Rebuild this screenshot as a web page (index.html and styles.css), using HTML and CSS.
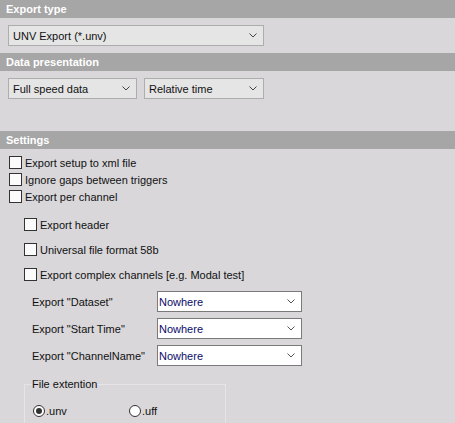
FILE: index.html
```html
<!DOCTYPE html>
<html>
<head>
<meta charset="utf-8">
<link rel="stylesheet" href="styles.css">
</head>
<body>
<div class="header">Export type</div>
<div class="section sec-type">
  <div class="combo combo-gray w-full"><span class="val">UNV Export (*.unv)</span><svg class="chev" width="8" height="5" viewBox="0 0 8 5"><path d="M0.5 0.5 L4 4 L7.5 0.5" fill="none" stroke="#444" stroke-width="1"/></svg></div>
</div>
<div class="header">Data presentation</div>
<div class="section sec-data">
  <div class="combo combo-gray w-a"><span class="val">Full speed data</span><svg class="chev" width="8" height="5" viewBox="0 0 8 5"><path d="M0.5 0.5 L4 4 L7.5 0.5" fill="none" stroke="#444" stroke-width="1"/></svg></div>
  <div class="combo combo-gray w-b"><span class="val">Relative time</span><svg class="chev" width="8" height="5" viewBox="0 0 8 5"><path d="M0.5 0.5 L4 4 L7.5 0.5" fill="none" stroke="#444" stroke-width="1"/></svg></div>
</div>
<div class="header">Settings</div>
<div class="section sec-settings">
  <div class="checks">
    <label class="check"><span class="box"></span>Export setup to xml file</label>
    <label class="check"><span class="box"></span>Ignore gaps between triggers</label>
    <label class="check"><span class="box"></span>Export per channel</label>
  </div>
  <div class="checks sub">
    <label class="check"><span class="box"></span>Export header</label>
    <label class="check"><span class="box"></span>Universal file format 58b</label>
    <label class="check"><span class="box"></span>Export complex channels [e.g. Modal test]</label>
  </div>
  <div class="fields">
    <div class="field"><span class="flabel">Export "Dataset"</span><div class="combo combo-white"><span class="val">Nowhere</span><svg class="chev" width="8" height="5" viewBox="0 0 8 5"><path d="M0.5 0.5 L4 4 L7.5 0.5" fill="none" stroke="#555" stroke-width="1"/></svg></div></div>
    <div class="field"><span class="flabel">Export "Start Time"</span><div class="combo combo-white"><span class="val">Nowhere</span><svg class="chev" width="8" height="5" viewBox="0 0 8 5"><path d="M0.5 0.5 L4 4 L7.5 0.5" fill="none" stroke="#555" stroke-width="1"/></svg></div></div>
    <div class="field"><span class="flabel">Export "ChannelName"</span><div class="combo combo-white"><span class="val">Nowhere</span><svg class="chev" width="8" height="5" viewBox="0 0 8 5"><path d="M0.5 0.5 L4 4 L7.5 0.5" fill="none" stroke="#555" stroke-width="1"/></svg></div></div>
  </div>
  <fieldset class="group">
    <legend>File extention</legend>
    <div class="radios">
      <label class="radio r1"><span class="circle checked"></span>.unv</label>
      <label class="radio"><span class="circle"></span>.uff</label>
    </div>
  </fieldset>
</div>
</body>
</html>
```

FILE: styles.css
```css
html, body {
  margin: 0;
  padding: 0;
}
body {
  width: 455px;
  height: 423px;
  overflow: hidden;
  background: #d9d7da;
  font-family: "Liberation Sans", Arial, sans-serif;
  font-size: 11px;
  color: #111;
}
.header {
  height: 18px;
  line-height: 18px;
  background: #a6a6a6;
  color: #fff;
  font-weight: bold;
  padding-left: 6px;
}
.section {
  padding-left: 8px;
}
.sec-type {
  padding-top: 7px;
  padding-bottom: 7px;
}
.sec-data {
  padding-top: 7px;
  padding-bottom: 32px;
  display: flex;
  gap: 7px;
}
.combo {
  box-sizing: border-box;
  height: 21px;
  display: flex;
  align-items: center;
  justify-content: space-between;
  padding: 0 6px 0 4px;
}
.combo-gray {
  background: #e5e5e5;
  border: 1px solid #adadad;
}
.combo-white {
  background: #fff;
  border: 1px solid #7a7a7a;
  width: 145px;
  padding-left: 1px;
}
.combo-white .val {
  color: #0c0c6a;
}
.w-full { width: 256px; }
.w-a { width: 129px; }
.w-b { width: 120px; }
.chev { display: block; }

.sec-settings {
  padding-left: 0;
  padding-top: 5px;
}
.checks {
  display: flex;
  flex-direction: column;
  padding-left: 9px;
}
.check {
  height: 17px;
  display: flex;
  align-items: center;
  gap: 3px;
}
.box {
  box-sizing: border-box;
  width: 13px;
  height: 13px;
  background: #fbfbfb;
  border: 1px solid #333;
}
.checks.sub {
  padding-left: 24px;
  margin-top: 11px;
  gap: 8px;
}
.fields {
  margin-top: 8px;
  padding-left: 32px;
  display: flex;
  flex-direction: column;
  gap: 6px;
}
.field {
  display: flex;
  align-items: center;
}
.flabel {
  width: 125px;
}
.group {
  margin: 12px 0 0 24px;
  padding: 0 0 0 8px;
  width: 202px;
  box-sizing: border-box;
  height: 60px;
  border: 1px solid #e6e4e7;
  border-bottom: none;
  min-width: 0;
}
.group legend {
  padding: 0;
  margin-left: -1px;
  line-height: 12px;
}
.radios {
  display: flex;
  margin-top: 15px;
}
.radio {
  display: flex;
  align-items: center;
  gap: 1px;
}
.r1 {
  width: 96px;
}
.circle {
  box-sizing: border-box;
  width: 12px;
  height: 12px;
  border-radius: 50%;
  border: 1px solid #333;
  background: #fff;
  position: relative;
}
.circle.checked::after {
  content: "";
  position: absolute;
  left: 2px;
  top: 2px;
  width: 6px;
  height: 6px;
  border-radius: 50%;
  background: #333;
}
```
